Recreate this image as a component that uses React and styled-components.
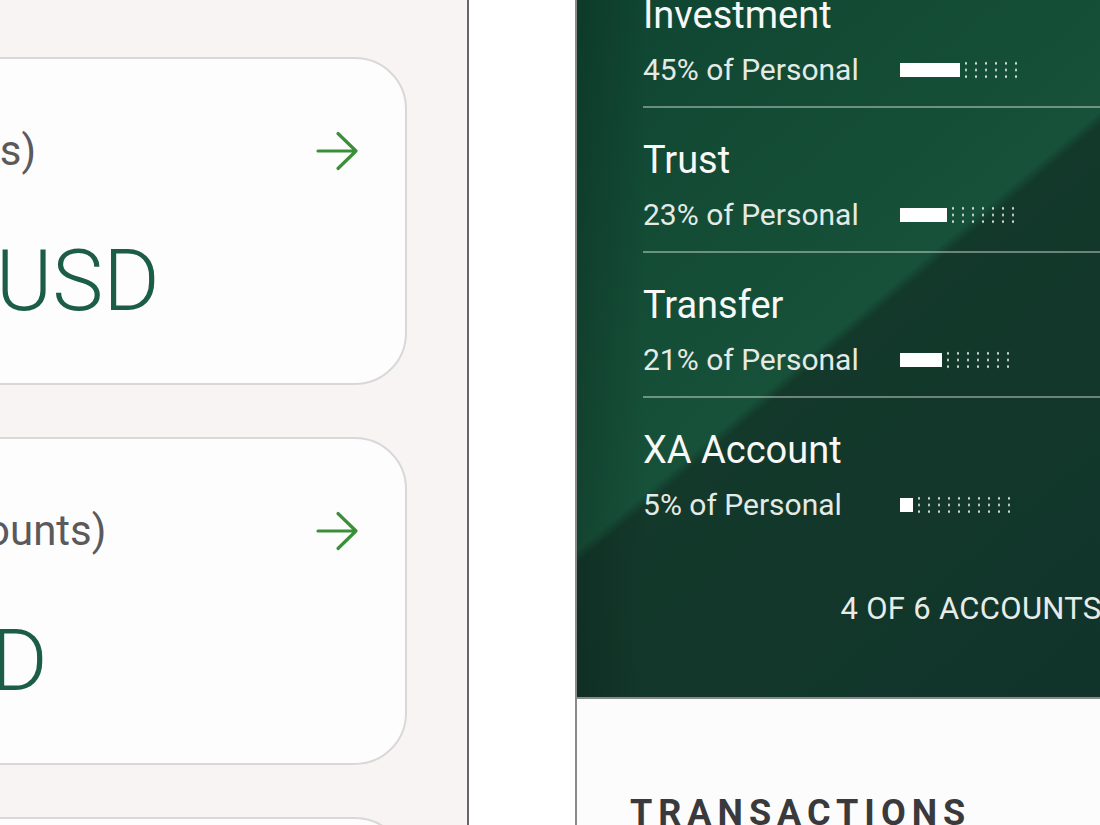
import React from 'react';
import styled, { createGlobalStyle } from 'styled-components';

const GlobalStyle = createGlobalStyle`
  * { box-sizing: border-box; }
  body {
    margin: 0;
    overflow: hidden;
    background: #ffffff;
    font-family: "Roboto", "Liberation Sans", sans-serif;
  }
`;

const summaries = [
    { title: 'Joint Wealth (2 Accounts)', amount: '$12,350.00 USD' },
    { title: 'Personal Wealth (6 Accounts)', amount: '$420.00 USD' },
    { title: 'Business (3 Accounts)', amount: '$8,900.00 USD' },
];

const accounts = [
    { name: 'Investment', pct: 45, fill: 60, dots: 6 },
    { name: 'Trust', pct: 23, fill: 47, dots: 7 },
    { name: 'Transfer', pct: 21, fill: 42, dots: 7 },
    { name: 'XA Account', pct: 5, fill: 13, dots: 10 },
];

function ArrowIcon() {
    return (
        <svg width="44" height="40" viewBox="0 0 44 40" fill="none">
            <path
                d="M3 20H41M23 2.5L41 20L23 37.5"
                stroke="#3a8f38"
                strokeWidth="3.2"
                strokeLinecap="round"
                strokeLinejoin="round"
            />
        </svg>
    );
}

export default function App() {
    return (
        <>
            <GlobalStyle />
            <Page>
                <LeftPhone>
                    {summaries.map((s) => (
                        <SummaryCard key={s.title}>
                            <CardHead>
                                <CardTitle>{s.title}</CardTitle>
                                <ArrowIcon />
                            </CardHead>
                            <Amount>{s.amount}</Amount>
                        </SummaryCard>
                    ))}
                </LeftPhone>

                <RightPhone>
                    <Header>
                        <AccountList>
                            {accounts.map((a) => (
                                <AccountRow key={a.name}>
                                    <AccountName>{a.name}</AccountName>
                                    <ShareLine>
                                        <span>{a.pct}% of Personal</span>
                                        <Bar>
                                            <BarFill $width={a.fill} />
                                            <BarDots $count={a.dots} />
                                        </Bar>
                                    </ShareLine>
                                </AccountRow>
                            ))}
                        </AccountList>
                        <Counter>4 OF 6 ACCOUNTS</Counter>
                    </Header>
                    <Body>
                        <SectionTitle>TRANSACTIONS</SectionTitle>
                    </Body>
                </RightPhone>
            </Page>
        </>
    );
}

const Page = styled.div`
    display: flex;
    gap: 106px;
    height: 100vh;
    overflow: hidden;
    background: #ffffff;
`;

const LeftPhone = styled.div`
    flex: none;
    width: 1029px;
    margin-left: -560px;
    padding: 57px 60px 0;
    display: flex;
    flex-direction: column;
    gap: 52px;
    background: #f7f4f3;
    border-right: 2px solid #676767;
`;

const SummaryCard = styled.div`
    flex: none;
    height: 328px;
    padding: 67px 46px 0 50px;
    background: #fefdfe;
    border: 2px solid #d9d7d8;
    border-radius: 52px;
`;

const CardHead = styled.div`
    display: flex;
    align-items: center;
    justify-content: space-between;
    height: 50px;
`;

const CardTitle = styled.div`
    font-size: 42px;
    line-height: 50px;
    color: #5a5a5c;
    white-space: nowrap;
`;

const Amount = styled.div`
    margin-top: 55px;
    padding-left: 4px;
    font-size: 86px;
    font-weight: 300;
    line-height: 100px;
    color: #1c5d45;
    white-space: nowrap;
`;

const RightPhone = styled.div`
    flex: none;
    width: 790px;
    display: flex;
    flex-direction: column;
    border-left: 2px solid #8a8a8a;
`;

const Header = styled.div`
    flex: none;
    height: 699px;
    padding: 0 66px;
    overflow: hidden;
    border-bottom: 2px solid #8a8a8a;
    background:
        linear-gradient(90deg, rgba(0, 0, 0, 0.16) 0, rgba(0, 0, 0, 0) 70px),
        linear-gradient(140deg, #0f4531 0%, #175139 40.5%, #13392b 41.5%, #10322a 100%);
    color: #f6f8f7;
`;

const AccountList = styled.div`
    margin-top: -37px;
`;

const AccountRow = styled.div`
    padding: 29px 0 18px;
    border-bottom: 2px solid rgba(255, 255, 255, 0.38);

    &:last-child {
        border-bottom: none;
    }
`;

const AccountName = styled.div`
    font-size: 38px;
    line-height: 46px;
    color: #f7f8f7;
`;

const ShareLine = styled.div`
    display: grid;
    grid-template-columns: 257px auto;
    align-items: center;
    margin-top: 14px;
    font-size: 30px;
    line-height: 36px;
    color: #e4eae6;
`;

const Bar = styled.div`
    display: flex;
    align-items: center;
`;

const BarFill = styled.div`
    width: ${(p) => p.$width}px;
    height: 14px;
    background: #ffffff;
`;

const BarDots = styled.div`
    width: ${(p) => p.$count * 10}px;
    height: 20px;
    margin-left: 1px;
    background-image: radial-gradient(circle, rgba(255, 255, 255, 0.85) 0.9px, transparent 1.4px);
    background-size: 10px 6.67px;
`;

const Counter = styled.div`
    margin-top: 50px;
    text-align: center;
    font-size: 31px;
    line-height: 36px;
    letter-spacing: 0.3px;
    color: #e8ece9;
`;

const Body = styled.div`
    flex: 1;
    padding: 92px 53px 0;
    background: #fdfcfd;
`;

const SectionTitle = styled.h2`
    margin: 0;
    font-size: 36px;
    font-weight: 700;
    line-height: 44px;
    letter-spacing: 6px;
    color: #3a3a3c;
`;
